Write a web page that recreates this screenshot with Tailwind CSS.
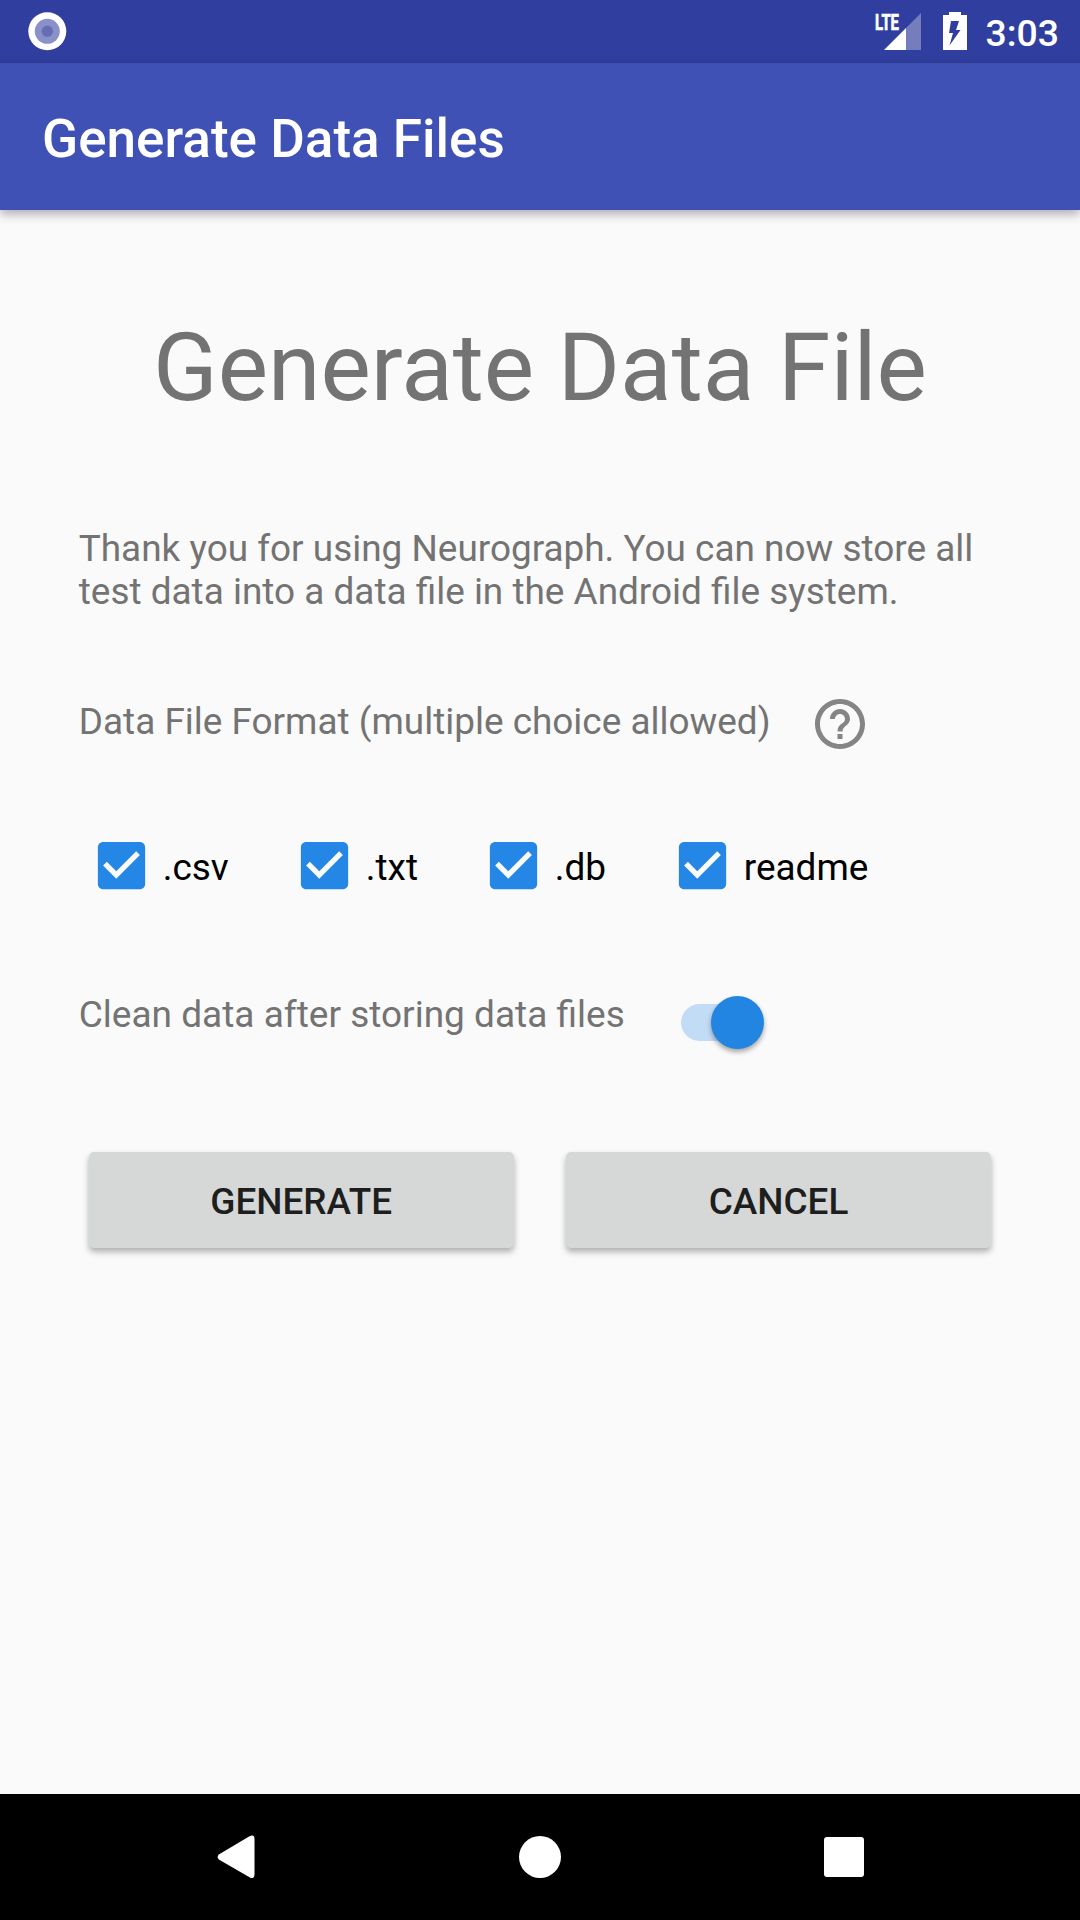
<!DOCTYPE html>
<html lang="en">
<head>
<meta charset="utf-8">
<title>Generate Data Files</title>
<script src="https://cdn.jsdelivr.net/npm/@tailwindcss/browser@4"></script>
</head>
<body class="flex h-[1920px] w-[1080px] flex-col overflow-hidden bg-[#fafafa] font-['Roboto',sans-serif] text-[36.93px] leading-[43px] text-[#737373]">
  <svg class="hidden">
    <symbol id="check" viewBox="0 0 24 24"><path fill="#2487e5" d="M19 3H5c-1.110 0-2 .9-2 2v14c0 1.100.89 2 2 2h14c1.110 0 2-.9 2-2V5c0-1.100-.89-2-2-2zm-9 14l-5-5 1.410-1.410L10 14.170l7.590-7.590L19 8l-9 9z"/></symbol>
  </svg>

  <!-- Status bar -->
  <div class="flex h-[63px] shrink-0 items-start justify-between bg-[#303f9f] text-white">
    <svg class="h-[63px] w-[80px]" viewBox="0 0 80 63"><circle cx="47.300" cy="31.300" r="19" fill="#fff"/><circle cx="47.300" cy="31.300" r="12.500" fill="#8a91c9"/><circle cx="47.300" cy="31.300" r="5.700" fill="#666db6"/></svg>
    <div class="flex pr-[21px]">
      <svg class="h-[63px] w-[116px]" viewBox="870 0 116 63">
        <path d="M906 28L921 13V50H906Z" fill="#757dbd"/><path d="M884 50L906 28V50Z" fill="#fff"/>
        <text x="875" y="30" font-size="22.500" font-weight="700" textLength="24" lengthAdjust="spacingAndGlyphs" fill="#fff" stroke="#fff" stroke-width="0.700">LTE</text>
        <path fill="#fff" fill-rule="evenodd" d="M949 12H961V15H967V50H943V15H949ZM951 21L949 33H953L949.500 45.500L960.500 30H956L959 21Z"/>
      </svg>
      <span class="pt-[12px] text-[37.3px] font-medium">3:03</span>
    </div>
  </div>

  <!-- App bar -->
  <header class="z-10 flex h-[147px] shrink-0 items-center bg-[#3f51b5] px-[42px] pt-[4px] shadow-[0_4px_10px_rgba(0,0,0,0.32)]">
    <h1 class="text-[53.05px] leading-[62px] font-medium text-white">Generate Data Files</h1>
  </header>

  <main class="flex flex-1 flex-col px-[78.75px] pt-[103px]">
    <h2 class="text-center text-[94.95px] leading-[110px]">Generate Data File</h2>
    <p class="mt-[104px]">Thank you for using Neurograph. You can now store all<br>test data into a data file in the Android file system.</p>

    <div class="mt-[81px] flex h-[60px] items-start">
      <span class="w-[731.25px] pt-[6px]">Data File Format (multiple choice allowed)</span>
      <svg class="size-[60px]" viewBox="0 0 24 24" fill="#858585"><path d="M11 18h2v-2h-2v2zm1-16C6.480 2 2 6.480 2 12s4.480 10 10 10 10-4.480 10-10S17.520 2 12 2zm0 18c-4.410 0-8-3.590-8-8s3.590-8 8-8 8 3.590 8 8-3.590 8-8 8zm0-14c-2.210 0-4 1.790-4 4h2c0-1.100.9-2 2-2s2 .9 2 2c0 2-3 1.750-3 5h2c0-2.250 3-2.500 3-5 0-2.210-1.790-4-4-4z"/></svg>
    </div>

    <div class="mt-[70px] flex h-[84px] items-center text-black">
      <label class="flex w-[203px] items-center"><svg class="mr-[10.25px] mb-px ml-[10.75px] size-[63px] shrink-0"><use href="#check"/></svg><span class="pt-[2px]">.csv</span></label>
      <label class="flex w-[189px] items-center"><svg class="mr-[10.25px] mb-px ml-[10.75px] size-[63px] shrink-0"><use href="#check"/></svg><span class="pt-[2px]">.txt</span></label>
      <label class="flex w-[189px] items-center"><svg class="mr-[10.25px] mb-px ml-[10.75px] size-[63px] shrink-0"><use href="#check"/></svg><span class="pt-[2px]">.db</span></label>
      <label class="flex items-center"><svg class="mr-[10.25px] mb-px ml-[10.75px] size-[63px] shrink-0"><use href="#check"/></svg><span class="pt-[2px]">readme</span></label>
    </div>

    <div class="mt-[72px] flex h-[72px] items-start">
      <span class="w-[602.25px] pt-[13px] text-[37.03px]">Clean data after storing data files</span>
      <div class="mt-[24px] flex h-[37px] w-[76px] items-center rounded-full bg-[#c3dcf5] pl-[30px]">
        <div class="size-[53px] shrink-0 rounded-full bg-[#2285e2] shadow-[0_3px_5px_rgba(0,0,0,0.35)]"></div>
      </div>
    </div>

    <div class="mt-[100px] flex gap-[52px] px-[10px] text-[#1d1e1d]">
      <button class="h-[96px] w-[425px] rounded-[5px] bg-[#d6d8d7] pt-[2px] font-medium shadow-[0_4px_6px_rgba(0,0,0,0.3)]">GENERATE</button>
      <button class="h-[96px] w-[425.5px] rounded-[5px] bg-[#d6d8d7] pt-[2px] font-medium shadow-[0_4px_6px_rgba(0,0,0,0.3)]">CANCEL</button>
    </div>
  </main>

  <!-- Navigation bar -->
  <nav class="h-[126px] shrink-0 bg-black">
    <svg class="h-[126px] w-[1080px]" viewBox="0 1794 1080 126" fill="#fff">
      <path d="M218.800 1854.500L249.500 1836.300Q254.500 1834 254.500 1839V1874Q254.500 1880 249.500 1877.200L218.800 1859.500Q216.500 1857 218.800 1854.500Z"/>
      <circle cx="540" cy="1857" r="21"/>
      <rect x="824" y="1837" width="40" height="40" rx="3"/>
    </svg>
  </nav>
</body>
</html>
